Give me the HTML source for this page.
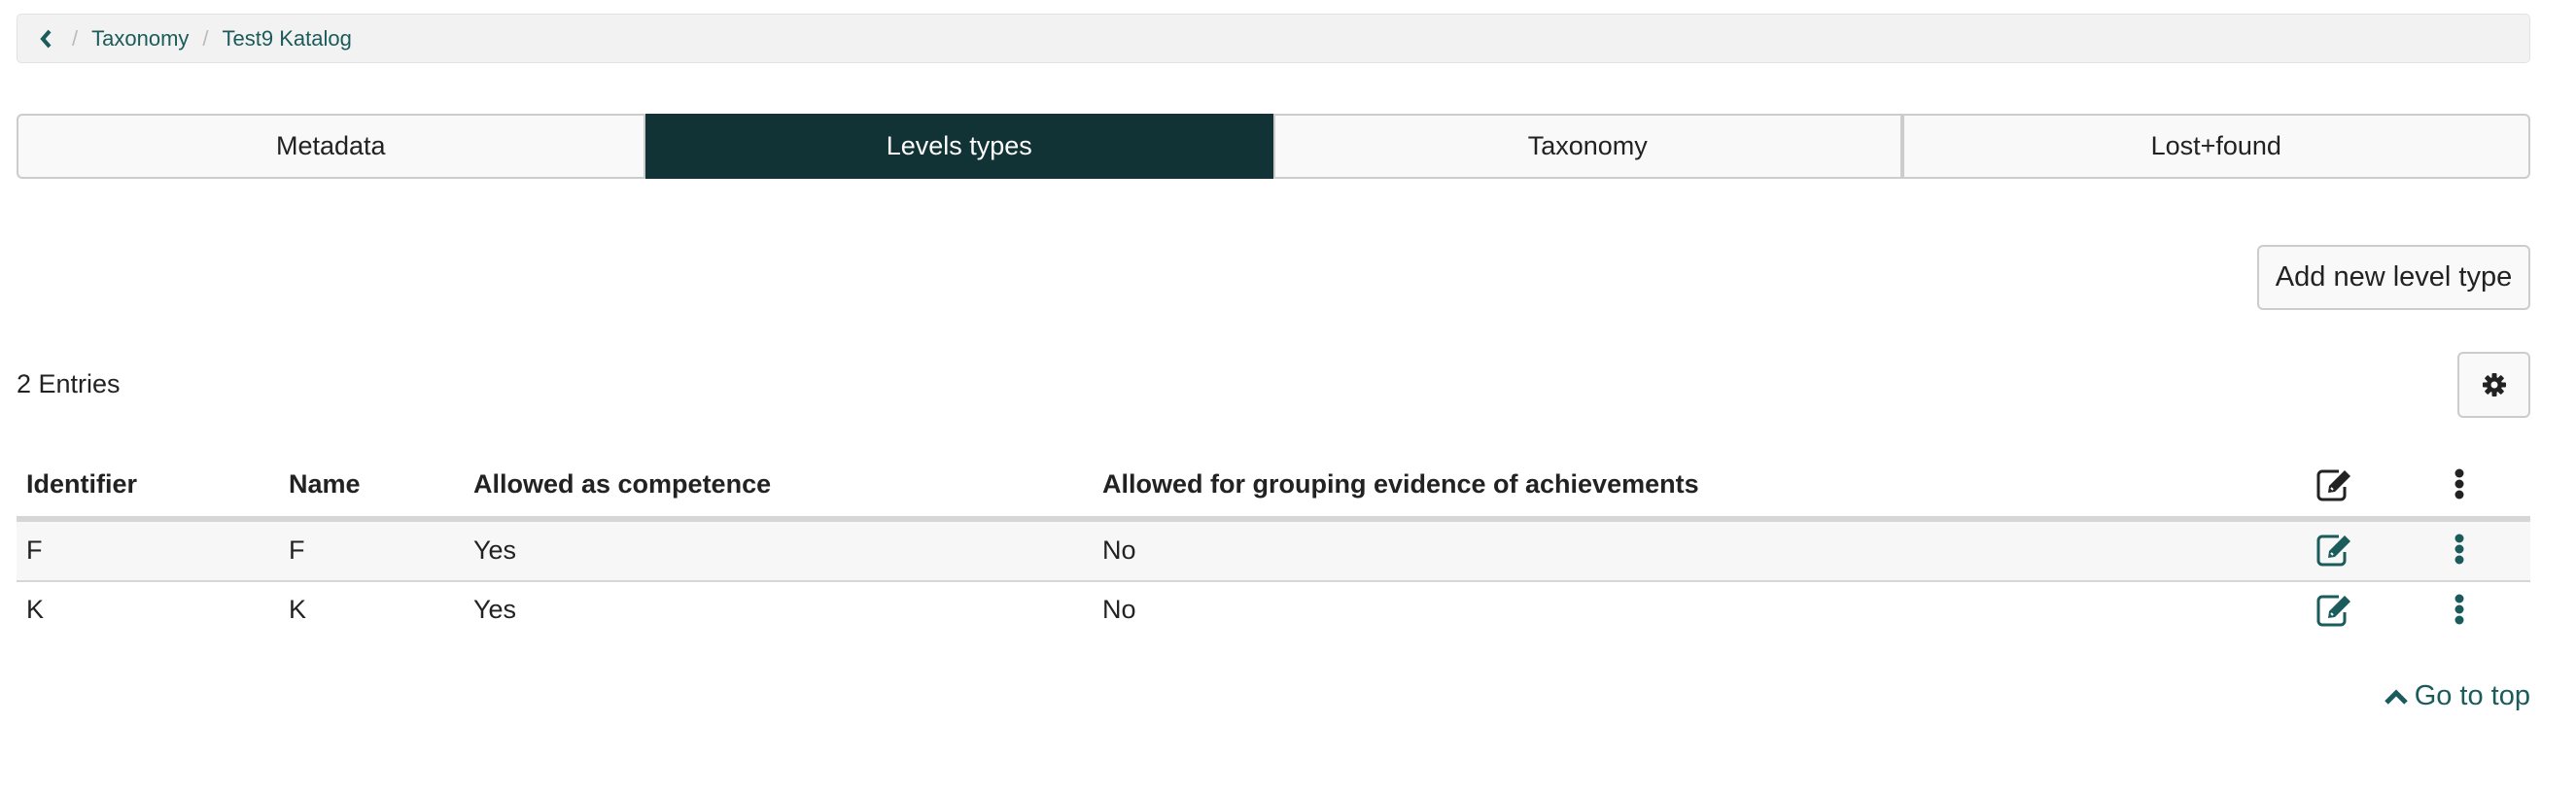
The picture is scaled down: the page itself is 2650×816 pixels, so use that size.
<!DOCTYPE html>
<html><head><meta charset="utf-8"><style>
*{box-sizing:border-box;margin:0;padding:0}
body{width:2650px;height:816px;background:#fff;font-family:"Liberation Sans",Arial,sans-serif;color:#222;position:relative;overflow:hidden}
.abs{position:absolute}
.bc{left:17px;top:14px;width:2586px;height:51px;background:#f2f2f2;border:1px solid #e2e2e2;border-radius:5px;font-size:22px;color:#1b5b5b;display:flex;align-items:center;padding-left:22px}
.bc .sep{color:#bbb;margin:0 14px}
.tabs{left:17px;top:117px;width:2586px;height:67px;display:flex}
.tab{flex:1;border:2px solid #ccc;background:#f9f9f9;display:flex;align-items:center;justify-content:center;font-size:27px;color:#222}
.tab:first-child{border-radius:6px 0 0 6px}
.tab:last-child{border-radius:0 6px 6px 0}
.tab.act{background:#123335;border-color:#123335;color:#fff}
.btn{border:2px solid #ccc;border-radius:6px;background:#f9f9f9;display:flex;align-items:center;justify-content:center;font-size:29px;color:#222}
.th{font-weight:bold;font-size:27px;top:483px}
.td{font-size:27px}
</style></head><body>
<div class="abs bc"><svg width="14" height="20" viewBox="0 0 14 20"><path d="M11 2 L4 10 L11 18" stroke="#1b5b5b" stroke-width="4" fill="none"/></svg><span class="sep" style="margin-left:20px">/</span>Taxonomy<span class="sep">/</span>Test9 Katalog</div>
<div class="abs tabs"><div class="tab">Metadata</div><div class="tab act">Levels types</div><div class="tab">Taxonomy</div><div class="tab">Lost+found</div></div>
<div class="abs btn" style="left:2322px;top:252px;width:281px;height:67px">Add new level type</div>
<div class="abs" style="left:17px;top:380px;font-size:27px">2 Entries</div>
<div class="abs btn" style="left:2528px;top:362px;width:75px;height:68px"><svg width="26" height="26" viewBox="0 0 26 26"><g fill="#222"><circle cx="13" cy="13" r="8"/><rect x="10.5" y="1" width="5" height="24" rx="1"/><rect x="1" y="10.5" width="24" height="5" rx="1"/><rect x="10.5" y="1" width="5" height="24" rx="1" transform="rotate(45 13 13)"/><rect x="10.5" y="1" width="5" height="24" rx="1" transform="rotate(-45 13 13)"/></g><circle cx="13" cy="13" r="3.5" fill="#f9f9f9"/></svg></div>
<div class="abs th" style="left:27px">Identifier</div>
<div class="abs th" style="left:297px">Name</div>
<div class="abs th" style="left:487px">Allowed as competence</div>
<div class="abs th" style="left:1134px">Allowed for grouping evidence of achievements</div>
<div class="abs" style="left:17px;top:531px;width:2586px;height:6px;background:#d6d6d6"></div>
<div class="abs" style="left:17px;top:537px;width:2586px;height:60px;background:#f7f7f7"></div>
<div class="abs" style="left:17px;top:597px;width:2586px;height:2px;background:#d6d6d6"></div>
<div class="abs td" style="left:27px;top:551px">F</div><div class="abs td" style="left:297px;top:551px">F</div><div class="abs td" style="left:487px;top:551px">Yes</div><div class="abs td" style="left:1134px;top:551px">No</div>
<div class="abs td" style="left:27px;top:612px">K</div><div class="abs td" style="left:297px;top:612px">K</div><div class="abs td" style="left:487px;top:612px">Yes</div><div class="abs td" style="left:1134px;top:612px">No</div>
<svg class="abs" style="left:2382px;top:481px" width="40" height="36" viewBox="0 0 40 36"><path d="M24 4 H7 a4 4 0 0 0 -4 4 V29 a4 4 0 0 0 4 4 H26 a4 4 0 0 0 4 -4 V20" stroke="#222" stroke-width="3" fill="none"/><path d="M30 3 L36 9 L20 25 L13 26 L14 19 Z" fill="#222"/><path d="M16 21 L18 23" stroke="#fff" stroke-width="2"/></svg>
<svg class="abs" style="left:2382px;top:548px" width="40" height="36" viewBox="0 0 40 36"><path d="M24 4 H7 a4 4 0 0 0 -4 4 V29 a4 4 0 0 0 4 4 H26 a4 4 0 0 0 4 -4 V20" stroke="#1b5b5b" stroke-width="3" fill="none"/><path d="M30 3 L36 9 L20 25 L13 26 L14 19 Z" fill="#1b5b5b"/><path d="M16 21 L18 23" stroke="#fff" stroke-width="2"/></svg>
<svg class="abs" style="left:2382px;top:610px" width="40" height="36" viewBox="0 0 40 36"><path d="M24 4 H7 a4 4 0 0 0 -4 4 V29 a4 4 0 0 0 4 4 H26 a4 4 0 0 0 4 -4 V20" stroke="#1b5b5b" stroke-width="3" fill="none"/><path d="M30 3 L36 9 L20 25 L13 26 L14 19 Z" fill="#1b5b5b"/><path d="M16 21 L18 23" stroke="#fff" stroke-width="2"/></svg>
<svg class="abs" style="left:2524px;top:482px" width="12" height="32"><circle cx="6" cy="5" r="4.5" fill="#222"/><circle cx="6" cy="16" r="4.5" fill="#222"/><circle cx="6" cy="27" r="4.5" fill="#222"/></svg>
<svg class="abs" style="left:2524px;top:549px" width="12" height="32"><circle cx="6" cy="5" r="4.5" fill="#1b5b5b"/><circle cx="6" cy="16" r="4.5" fill="#1b5b5b"/><circle cx="6" cy="27" r="4.5" fill="#1b5b5b"/></svg>
<svg class="abs" style="left:2524px;top:611px" width="12" height="32"><circle cx="6" cy="5" r="4.5" fill="#1b5b5b"/><circle cx="6" cy="16" r="4.5" fill="#1b5b5b"/><circle cx="6" cy="27" r="4.5" fill="#1b5b5b"/></svg>
<div class="abs" style="right:47px;top:700px;font-size:29px;color:#1b5b5b;display:flex;align-items:center"><svg width="26" height="18" viewBox="0 0 26 18" style="margin-right:6px"><path d="M3 15 L13 5 L23 15" stroke="#1b5b5b" stroke-width="5" fill="none"/></svg>Go to top</div>
</body></html>
